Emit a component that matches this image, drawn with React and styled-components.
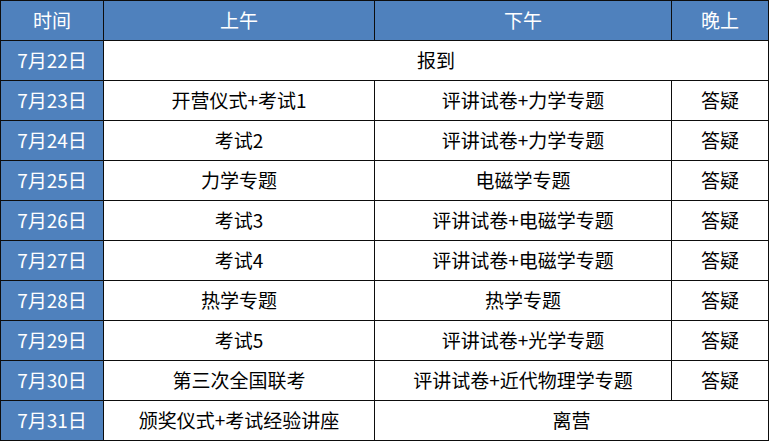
import React from "react";
import styled, { createGlobalStyle } from "styled-components";

const Global = createGlobalStyle`
  html, body { margin: 0; padding: 0; background: #fff; }
  body { font-family: "Noto Sans CJK SC", "Noto Sans", sans-serif; }
`;

const Table = styled.div`
  display: grid;
  grid-template-columns: 102px 270px 296px 96px;
  grid-auto-rows: 39px;
  gap: 1px;
  padding: 1px;
  width: 769px;
  box-sizing: border-box;
  background: #0d0d0d;
`;

const Cell = styled.div`
  display: flex;
  align-items: center;
  justify-content: center;
  padding-bottom: 2px;
  box-sizing: border-box;
  font-size: 19px;
  line-height: 1;
  white-space: nowrap;
  grid-column: ${(p) => (p.$span ? `span ${p.$span}` : "auto")};
  background: ${(p) => (p.$blue ? "#4f81bd" : "#ffffff")};
  color: ${(p) => (p.$blue ? "#ffffff" : "#000000")};
`;

const header = ["时间", "上午", "下午", "晚上"];

const rows = [
  { d: "7月22日", cells: [{ t: "报到", span: 3 }] },
  { d: "7月23日", cells: [{ t: "开营仪式+考试1" }, { t: "评讲试卷+力学专题" }, { t: "答疑" }] },
  { d: "7月24日", cells: [{ t: "考试2" }, { t: "评讲试卷+力学专题" }, { t: "答疑" }] },
  { d: "7月25日", cells: [{ t: "力学专题" }, { t: "电磁学专题" }, { t: "答疑" }] },
  { d: "7月26日", cells: [{ t: "考试3" }, { t: "评讲试卷+电磁学专题" }, { t: "答疑" }] },
  { d: "7月27日", cells: [{ t: "考试4" }, { t: "评讲试卷+电磁学专题" }, { t: "答疑" }] },
  { d: "7月28日", cells: [{ t: "热学专题" }, { t: "热学专题" }, { t: "答疑" }] },
  { d: "7月29日", cells: [{ t: "考试5" }, { t: "评讲试卷+光学专题" }, { t: "答疑" }] },
  { d: "7月30日", cells: [{ t: "第三次全国联考" }, { t: "评讲试卷+近代物理学专题" }, { t: "答疑" }] },
  { d: "7月31日", cells: [{ t: "颁奖仪式+考试经验讲座" }, { t: "离营", span: 2 }] },
];

export default function App() {
  return (
    <>
      <Global />
      <Table>
        {header.map((h) => (
          <Cell key={h} $blue>
            {h}
          </Cell>
        ))}
        {rows.map((r) => (
          <React.Fragment key={r.d}>
            <Cell $blue>{r.d}</Cell>
            {r.cells.map((c, i) => (
              <Cell key={i} $span={c.span}>
                {c.t}
              </Cell>
            ))}
          </React.Fragment>
        ))}
      </Table>
    </>
  );
}
